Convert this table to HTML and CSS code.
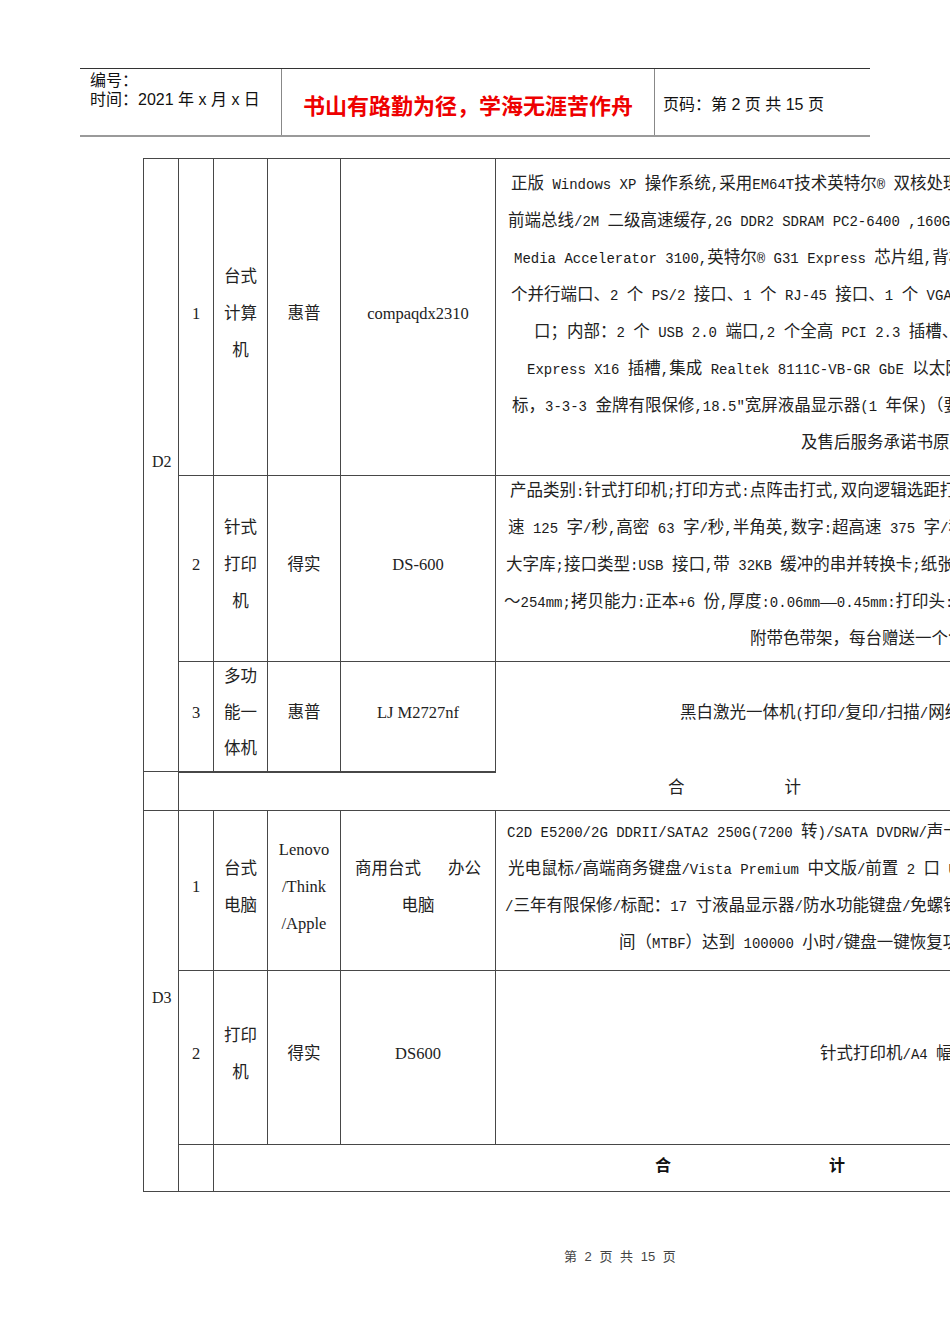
FILE: index.html
```html
<!DOCTYPE html>
<html lang="zh-CN">
<head>
<meta charset="utf-8">
<title>第 2 页</title>
<link rel="stylesheet" href="styles.css">
</head>
<body>
<div class="page">
  <header class="hdr">
    <div class="hdr-left">编号：<br>时间：2021 年 x 月 x 日</div>
    <div class="hdr-mid">书山有路勤为径，学海无涯苦作舟</div>
    <div class="hdr-right">页码：第 2 页 共 15 页</div>
  </header>

  <table class="spec">
    <colgroup>
      <col class="c1"><col class="c2"><col class="c3"><col class="c4"><col class="c5"><col class="c6">
    </colgroup>
    <tbody>
      <tr class="r1">
        <td class="grp" rowspan="3">D2</td>
        <td>1</td>
        <td class="stack"><div class="ln">台式</div><div class="ln">计算</div><div class="ln">机</div></td>
        <td>惠普</td>
        <td>compaqdx2310</td>
        <td class="desc stack">
          <div class="ln i15">正版<span class="en"> Windows XP </span>操作系统<span class="en">,</span>采用<span class="en">EM64T</span>技术英特尔<span class="en">® </span>双核处理器<span class="en">E2160</span></div>
          <div class="ln i12">前端总线<span class="en">/2M </span>二级高速缓存<span class="en">,2G DDR2 SDRAM PC2-6400 ,160G SATA </span>硬盘</div>
          <div class="ln i18"><span class="en">Media Accelerator 3100,</span>英特尔<span class="en">® G31 Express </span>芯片组<span class="en">,</span>背板</div>
          <div class="ln i15">个并行端口、<span class="en">2 </span>个<span class="en"> PS/2 </span>接口、<span class="en">1 </span>个<span class="en"> RJ-45 </span>接口、<span class="en">1 </span>个<span class="en"> VGA </span>接口</div>
          <div class="ln i38">口；内部：<span class="en">2 </span>个<span class="en"> USB 2.0 </span>端口<span class="en">,2 </span>个全高<span class="en"> PCI 2.3 </span>插槽、</div>
          <div class="ln i31"><span class="en">Express X16 </span>插槽<span class="en">,</span>集成<span class="en"> Realtek 8111C-VB-GR GbE </span>以太网</div>
          <div class="ln i16">标，<span class="en">3-3-3 </span>金牌有限保修<span class="en">,18.5″</span>宽屏液晶显示器<span class="en">(1 </span>年保<span class="en">)</span>（要求</div>
          <div class="ln i305">及售后服务承诺书原件）</div>
        </td>
      </tr>
      <tr class="r2">
        <td>2</td>
        <td class="stack"><div class="ln">针式</div><div class="ln">打印</div><div class="ln">机</div></td>
        <td>得实</td>
        <td>DS-600</td>
        <td class="desc stack">
          <div class="ln i14">产品类别<span class="en">:</span>针式打印机<span class="en">;</span>打印方式<span class="en">:</span>点阵击打式<span class="en">,</span>双向逻辑选距打印</div>
          <div class="ln i12">速<span class="en"> 125 </span>字<span class="en">/</span>秒<span class="en">,</span>高密<span class="en"> 63 </span>字<span class="en">/</span>秒<span class="en">,</span>半角英<span class="en">,</span>数字<span class="en">:</span>超高速<span class="en"> 375 </span>字<span class="en">/</span>秒<span class="en">,</span>汉字</div>
          <div class="ln i10">大字库<span class="en">;</span>接口类型<span class="en">:USB </span>接口<span class="en">,</span>带<span class="en"> 32KB </span>缓冲的串并转换卡<span class="en">;</span>纸张厚度</div>
          <div class="ln i8">～<span class="en">254mm;</span>拷贝能力<span class="en">:</span>正本<span class="en">+6 </span>份<span class="en">,</span>厚度<span class="en">:0.06mm</span>—<span class="en">0.45mm:</span>打印头<span class="en">:24</span></div>
          <div class="ln i254">附带色带架，每台赠送一个色带</div>
        </td>
      </tr>
      <tr class="r3">
        <td>3</td>
        <td class="stack"><div class="ln">多功</div><div class="ln">能一</div><div class="ln">体机</div></td>
        <td>惠普</td>
        <td>LJ M2727nf</td>
        <td class="desc open-bottom">
          <div class="one i184">黑白激光一体机<span class="en">(</span>打印<span class="en">/</span>复印<span class="en">/</span>扫描<span class="en">/</span>网络<span class="en">)</span></div>
        </td>
      </tr>
      <tr class="sum1">
        <td></td>
        <td class="total open-top" colspan="5"><span class="t-a">合</span><span class="t-b">计</span></td>
      </tr>

      <tr class="r4">
        <td class="grp" rowspan="3">D3</td>
        <td>1</td>
        <td class="stack"><div class="ln">台式</div><div class="ln">电脑</div></td>
        <td class="stack"><div class="ln">Lenovo</div><div class="ln">/Think</div><div class="ln">/Apple</div></td>
        <td class="stack"><div class="ln"><span class="spread"><span>商用台式</span><span>办公</span></span></div><div class="ln">电脑</div></td>
        <td class="desc stack">
          <div class="ln i11"><span class="en">C2D E5200/2G DDRII/SATA2 250G(7200 </span>转<span class="en">)/SATA DVDRW/</span>声卡</div>
          <div class="ln i12">光电鼠标<span class="en">/</span>高端商务键盘<span class="en">/Vista Premium </span>中文版<span class="en">/</span>前置<span class="en"> 2 </span>口<span class="en"> USB</span></div>
          <div class="ln i9"><span class="en">/</span>三年有限保修<span class="en">/</span>标配：<span class="en">17 </span>寸液晶显示器<span class="en">/</span>防水功能键盘<span class="en">/</span>免螺钉</div>
          <div class="ln i123">间（<span class="en">MTBF</span>）达到<span class="en"> 100000 </span>小时<span class="en">/</span>键盘一键恢复功能</div>
        </td>
      </tr>
      <tr class="r5">
        <td>2</td>
        <td class="stack"><div class="ln">打印</div><div class="ln">机</div></td>
        <td>得实</td>
        <td>DS600</td>
        <td class="desc">
          <div class="one i324">针式打印机<span class="en">/A4 </span>幅面</div>
        </td>
      </tr>
      <tr class="sum2">
        <td></td>
        <td class="total bold" colspan="4"><span class="t-c">合</span><span class="t-d">计</span></td>
      </tr>
    </tbody>
  </table>

  <footer class="foot">第 2 页 共 15 页</footer>
</div>
</body>
</html>
```

FILE: styles.css
```css
html, body {
  margin: 0;
  padding: 0;
  overflow: hidden;
  background: #ffffff;
}

.page {
  width: 950px;
}

/* ---------- header ---------- */
.hdr {
  margin: 68px 0 0 80px;
  width: 790px;
  height: 66px;
  display: grid;
  grid-template-columns: 201px 374px 215px;
  border-top: 1px solid #333;
  border-bottom: 2px solid #9a9a9a;
  font-family: "Liberation Sans", "Noto Sans CJK SC", sans-serif;
  font-size: 16px;
  color: #111;
}

.hdr-left {
  padding: 2px 0 0 10px;
  line-height: 19px;
}

.hdr-mid {
  border-left: 1px solid #888;
  border-right: 1px solid #888;
  display: flex;
  align-items: center;
  justify-content: center;
  padding-top: 3px;
  color: #ee0000;
  font-size: 22px;
  font-weight: bold;
}

.hdr-right {
  display: flex;
  align-items: center;
  padding: 2px 0 0 8px;
}

/* ---------- table ---------- */
.spec {
  margin: 21px 0 0 143px;
  border-collapse: collapse;
  table-layout: fixed;
  width: 1252px;
}

.c1 { width: 35px; }
.c2 { width: 35px; }
.c3 { width: 54px; }
.c4 { width: 73px; }
.c5 { width: 155px; }
.c6 { width: 900px; }

.spec td {
  border: 1px solid #474747;
  padding: 0 0 8px;
  font-family: "Liberation Serif", "Noto Sans CJK SC", serif;
  font-size: 16.5px;
  line-height: 29px;
  color: #222;
  text-align: center;
  vertical-align: middle;
  overflow: hidden;
}

.spec td.stack {
  padding: 0;
}

.r1 { height: 317px; }
.r2 { height: 185px; }
.r3 { height: 110px; }
.sum1 { height: 39px; }
.r4 { height: 160px; }
.r5 { height: 174px; }
.sum2 { height: 47px; }

.spec td.grp {
  text-align: left;
  padding-left: 8px;
  font-size: 16px;
}

.spec td.desc {
  text-align: left;
}

.spec td.open-bottom { border-bottom: none; }
.spec td.open-top { border-top: none; }

/* one printed line: 37px pitch, glyphs sitting a little high as in the source */
.ln {
  white-space: nowrap;
  box-sizing: border-box;
  height: 37px;
  line-height: 29px;
  padding-bottom: 8px;
}

.r3 .ln {
  height: 36px;
  line-height: 28px;
}

.one {
  white-space: nowrap;
}

.en {
  font-family: "Liberation Mono", "Noto Sans CJK SC", monospace;
  font-size: 14px;
  line-height: 1;
  color: #1a1a1a;
}

.i8 { padding-left: 8px; }
.i9 { padding-left: 9px; }
.i10 { padding-left: 10px; }
.i11 { padding-left: 11px; }
.i12 { padding-left: 12px; }
.i14 { padding-left: 14px; }
.i15 { padding-left: 15px; }
.i16 { padding-left: 16px; }
.i18 { padding-left: 18px; }
.i31 { padding-left: 31px; }
.i38 { padding-left: 38px; }
.i123 { padding-left: 123px; }
.i184 { padding-left: 184px; }
.i254 { padding-left: 254px; }
.i305 { padding-left: 305px; }
.i324 { padding-left: 324px; }

.spread {
  display: flex;
  justify-content: space-between;
  width: 126px;
  margin: 0 auto;
}

.spec td.total {
  text-align: left;
}

.total.open-top {
  background: linear-gradient(#474747, #474747) no-repeat 0 0 / 317px 1px;
}

.t-a { margin-left: 489px; }
.t-b { margin-left: 100px; }

.spec td.bold {
  font-family: "Noto Sans CJK SC", sans-serif;
  font-size: 16px;
  font-weight: bold;
  color: #111;
}

.t-c { margin-left: 441px; }
.t-d { margin-left: 158px; }

/* ---------- footer ---------- */
.foot {
  margin: 56px 0 0 564px;
  font-family: "Liberation Sans", "Noto Sans CJK SC", sans-serif;
  font-size: 13px;
  line-height: 18px;
  word-spacing: 4px;
  color: #444;
}
```
